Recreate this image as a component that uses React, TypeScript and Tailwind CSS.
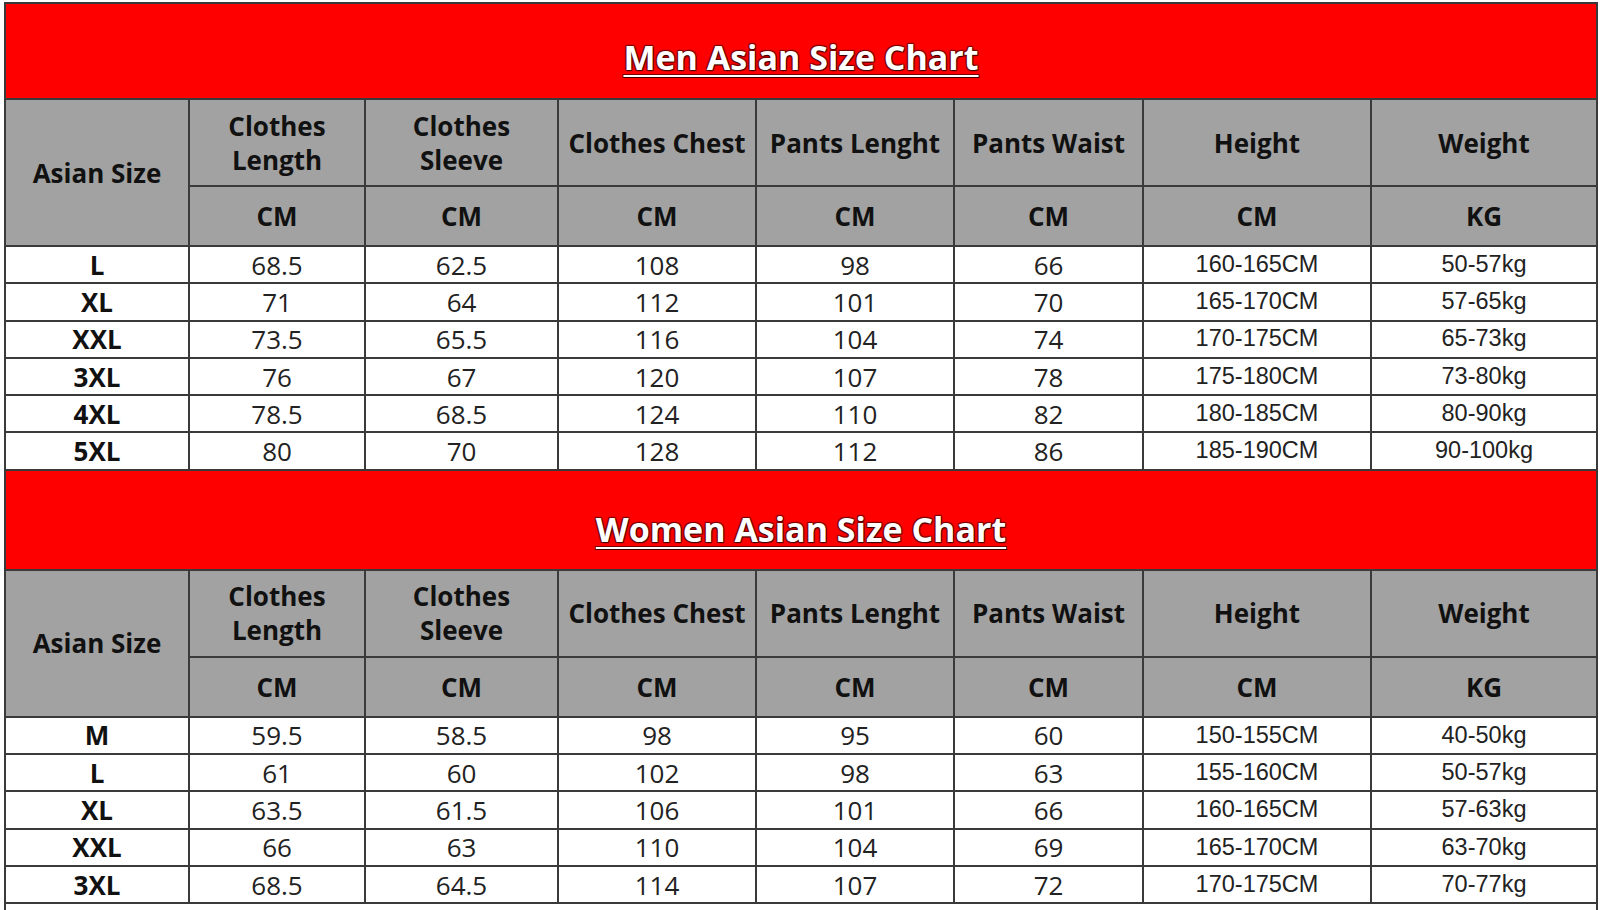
import React from "react";

type Section = {
  title: string;
  titleH: string;
  titlePad: string;
  rows: string[][];
};

const headers: string[][] = [
  ["Clothes", "Length"],
  ["Clothes", "Sleeve"],
  ["Clothes Chest"],
  ["Pants Lenght"],
  ["Pants Waist"],
  ["Height"],
  ["Weight"],
];
const units = ["CM", "CM", "CM", "CM", "CM", "CM", "KG"];

const sections: Section[] = [
  {
    title: "Men Asian Size Chart",
    titleH: "h-[96px]",
    titlePad: "pt-[12px]",
    rows: [
      ["L", "68.5", "62.5", "108", "98", "66", "160-165CM", "50-57kg"],
      ["XL", "71", "64", "112", "101", "70", "165-170CM", "57-65kg"],
      ["XXL", "73.5", "65.5", "116", "104", "74", "170-175CM", "65-73kg"],
      ["3XL", "76", "67", "120", "107", "78", "175-180CM", "73-80kg"],
      ["4XL", "78.5", "68.5", "124", "110", "82", "180-185CM", "80-90kg"],
      ["5XL", "80", "70", "128", "112", "86", "185-190CM", "90-100kg"],
    ],
  },
  {
    title: "Women Asian Size Chart",
    titleH: "h-[100px]",
    titlePad: "pt-[20px]",
    rows: [
      ["M", "59.5", "58.5", "98", "95", "60", "150-155CM", "40-50kg"],
      ["L", "61", "60", "102", "98", "63", "155-160CM", "50-57kg"],
      ["XL", "63.5", "61.5", "106", "101", "66", "160-165CM", "57-63kg"],
      ["XXL", "66", "63", "110", "104", "69", "165-170CM", "63-70kg"],
      ["3XL", "68.5", "64.5", "114", "107", "72", "170-175CM", "70-77kg"],
    ],
  },
];

const cell = "border-2 border-[#3a3a3a] text-center align-middle p-0";
const open = "font-['Open_Sans',sans-serif]";
const arial = "font-['Liberation_Sans',Arial,sans-serif]";

function SectionRows({ s }: { s: Section }) {
  return (
    <>
      <tr className={s.titleH}>
        <td colSpan={8} className={`${cell} bg-[#fe0000] ${s.titlePad}`}>
          <span
            className={`${open} text-[34px] font-bold text-white underline decoration-[2px] underline-offset-[5px] [text-shadow:1px_1px_1px_#3a0000,-1px_-1px_1px_#7a0000,1px_-1px_1px_#7a0000,-1px_1px_1px_#7a0000]`}
          >
            {s.title}
          </span>
        </td>
      </tr>
      <tr className="h-[87px]">
        <td rowSpan={2} className={`${cell} bg-[#a2a2a2] ${open} text-[26px] font-bold text-[#111] leading-none`}>
          Asian Size
        </td>
        {headers.map((h, i) => (
          <td key={i} className={`${cell} bg-[#a2a2a2] ${open} text-[26px] font-bold text-[#111] leading-[34px] whitespace-nowrap`}>
            {h.map((line, j) => (
              <div key={j}>{line}</div>
            ))}
          </td>
        ))}
      </tr>
      <tr className="h-[60px]">
        {units.map((u, i) => (
          <td key={i} className={`${cell} bg-[#a2a2a2] ${open} text-[26px] font-bold text-[#111] leading-none`}>
            {u}
          </td>
        ))}
      </tr>
      {s.rows.map((r, ri) => (
        <tr key={ri} className="h-[37.3px]">
          {r.map((v, ci) => (
            <td
              key={ci}
              className={`${cell} bg-white leading-none ${
                ci === 0
                  ? `${open} text-[26px] font-bold text-[#111]`
                  : ci < 6
                  ? `${open} text-[26px] text-[#222]`
                  : `${arial} text-[23.5px] text-[#222]`
              }`}
            >
              {v}
            </td>
          ))}
        </tr>
      ))}
    </>
  );
}

export default function App() {
  return (
    <div className="w-[1600px] h-[910px] overflow-hidden bg-white">
      <table className="ml-[4px] mt-[2px] w-[1592px] table-fixed border-collapse">
        <colgroup>
          <col className="w-[184px]" />
          <col className="w-[176px]" />
          <col className="w-[193px]" />
          <col className="w-[198px]" />
          <col className="w-[198px]" />
          <col className="w-[189px]" />
          <col className="w-[228px]" />
          <col className="w-[226px]" />
        </colgroup>
        <tbody>
          {sections.map((s, i) => (
            <SectionRows key={i} s={s} />
          ))}
          <tr className="h-[20px]">
            <td colSpan={8} className="border-x-2 border-t-2 border-b-0 border-[#3a3a3a] bg-white p-0" />
          </tr>
        </tbody>
      </table>
    </div>
  );
}
